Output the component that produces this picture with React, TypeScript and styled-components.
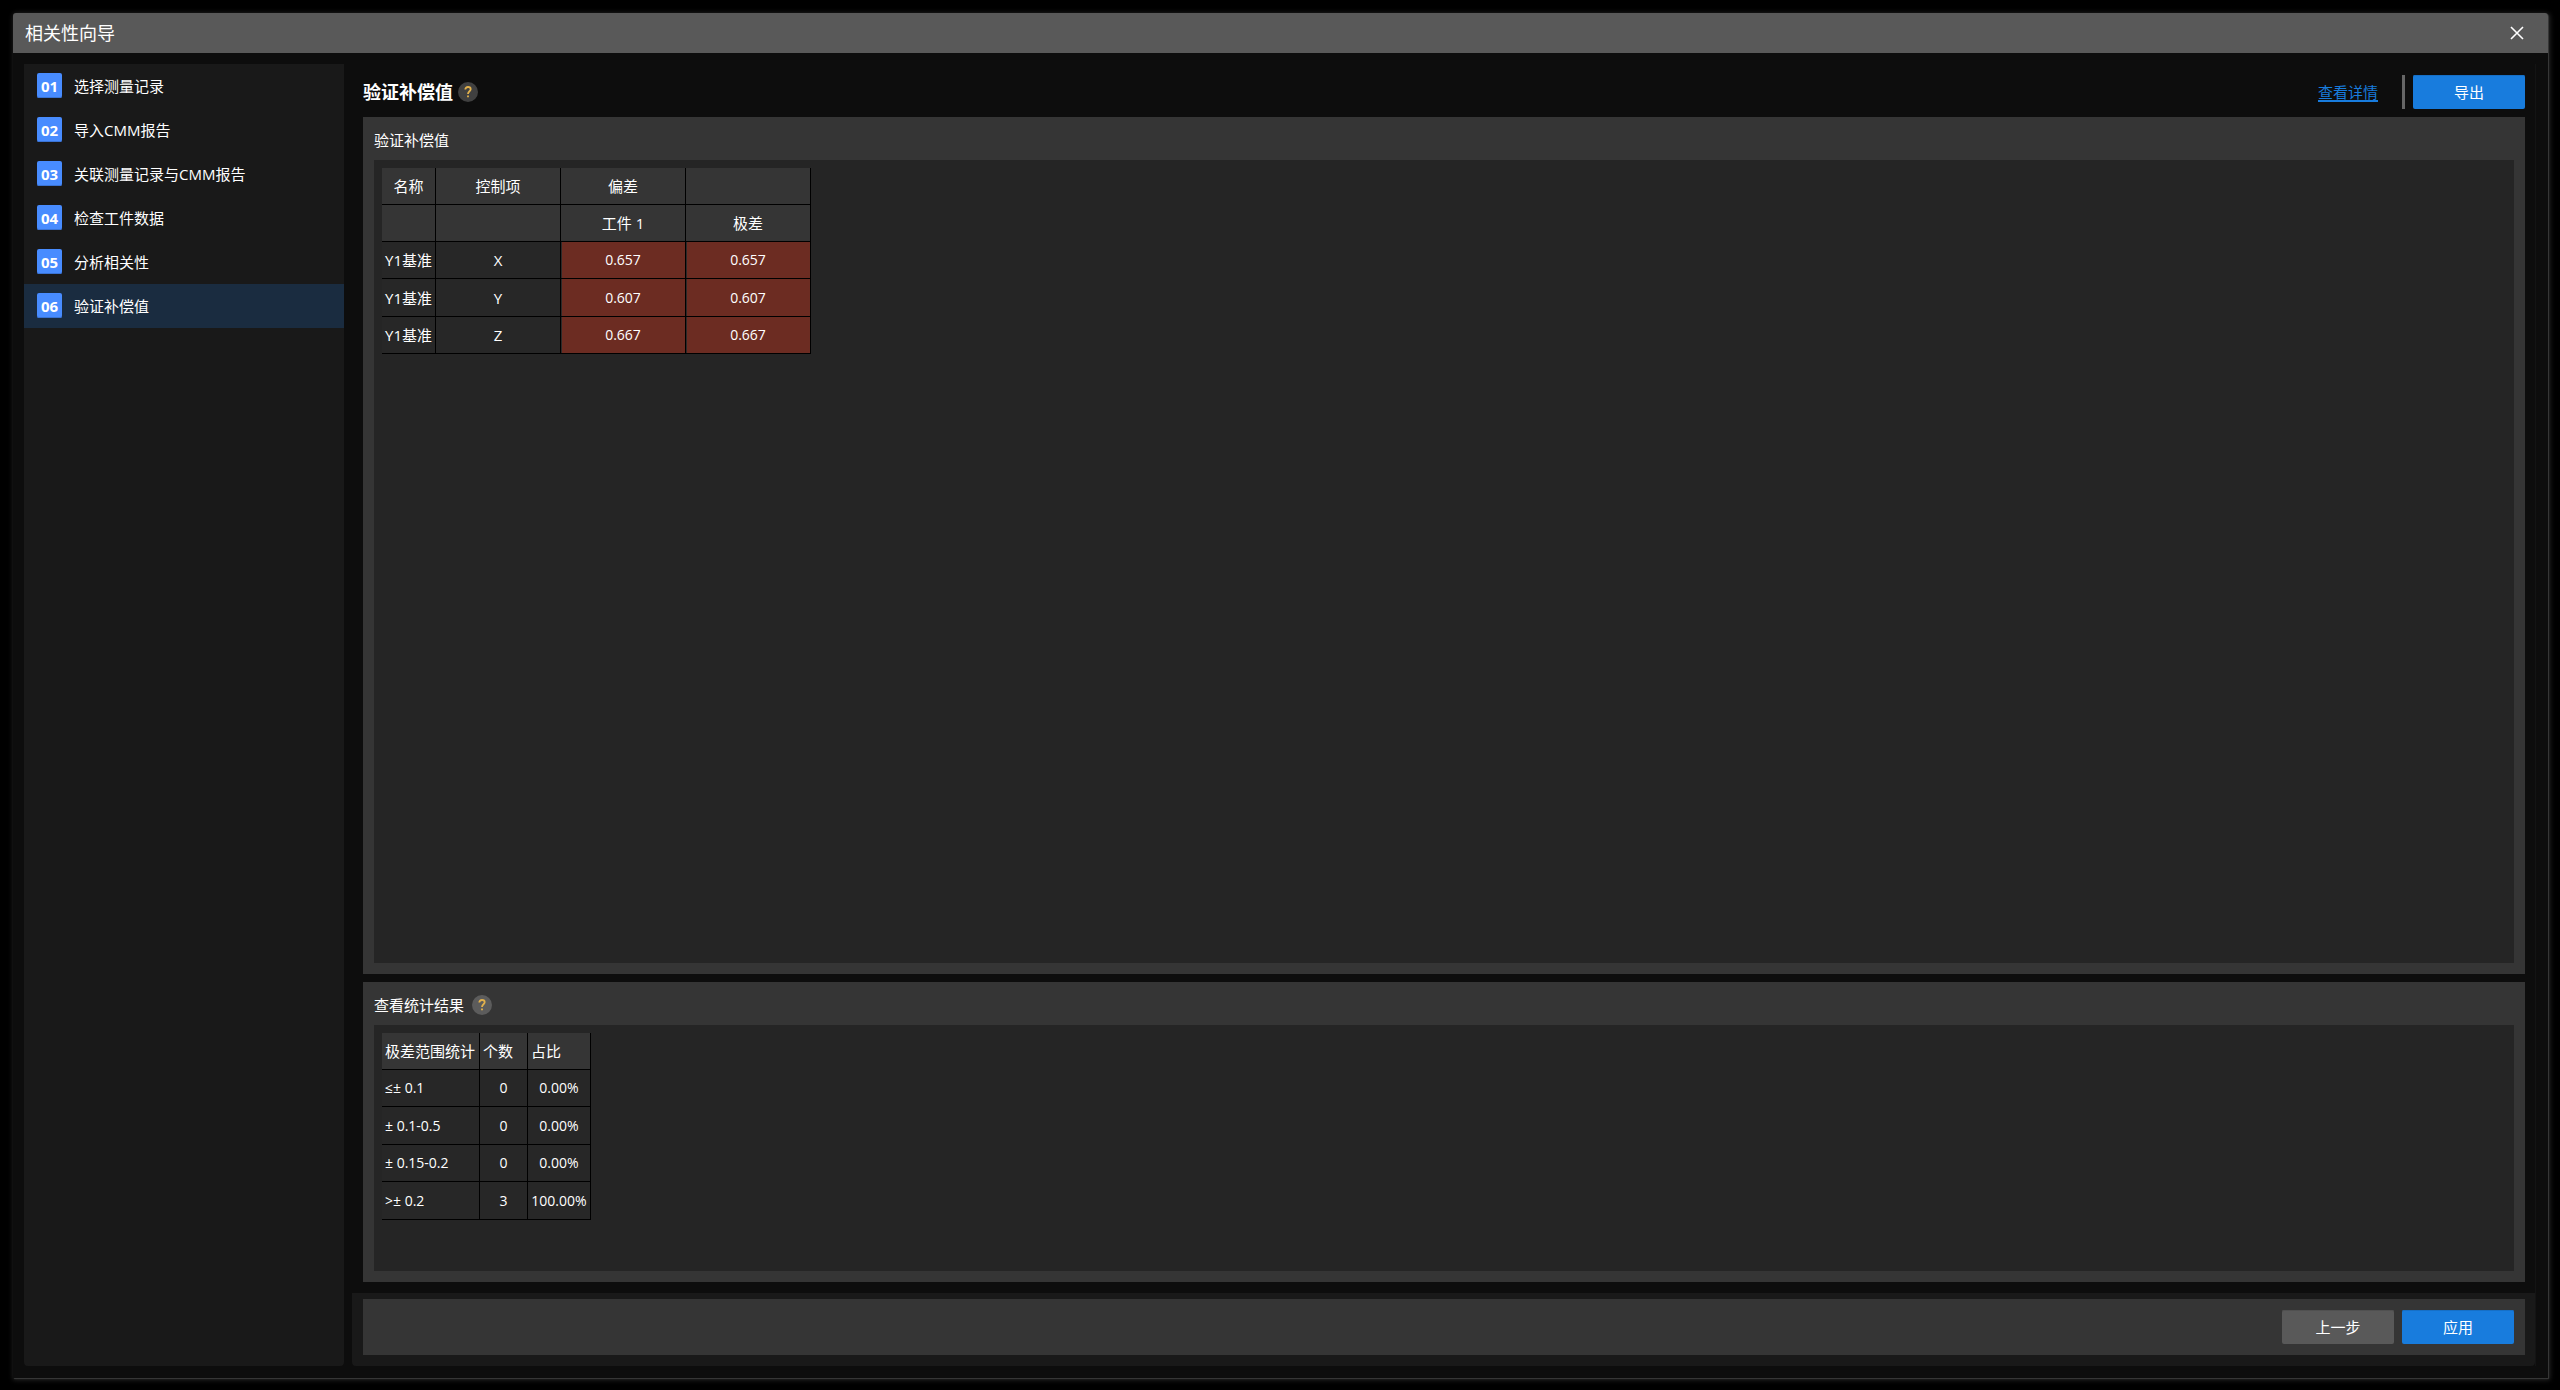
import React from "react";
import styled, { createGlobalStyle, css } from "styled-components";

const GlobalStyle = createGlobalStyle`
  *, *::before, *::after { box-sizing: border-box; }
  html, body, #root { height: 100%; }
  body {
    margin: 0;
    background: #000;
    color: #fff;
    font: 15px/20px "Open Sans", "Noto Sans CJK SC", sans-serif;
  }
  button { font: inherit; color: inherit; cursor: pointer; }
`;

const Screen = styled.div`
  min-height: 100%;
  padding: 13px 12px 12px 13px;
  display: flex;
`;

const Dialog = styled.section`
  flex: 1;
  min-width: 0;
  display: flex;
  flex-direction: column;
  background: #0d0d0d;
  border-radius: 3px 3px 0 0;
  box-shadow: 1px 1px 1px #3a3a3a, 1px 1px 5px 1px #262626;
`;

const TitleBar = styled.header`
  height: 40px;
  padding: 0 24px 0 12px;
  display: flex;
  align-items: center;
  justify-content: space-between;
  background: #595959;
  border-radius: 3px 3px 0 0;
`;

const Title = styled.h1`
  margin: 0;
  font-size: 18px;
  line-height: 24px;
  font-weight: 400;
`;

const CloseButton = styled.button`
  display: flex;
  padding: 0;
  border: 0;
  background: none;
`;

const Body = styled.div`
  flex: 1;
  display: flex;
  gap: 8px;
  padding: 11px 12px 12px 11px;
`;

const Steps = styled.nav`
  width: 320px;
  flex: none;
  background: #191919;
  border-radius: 0 0 4px 4px;
`;

const StepList = styled.ol`
  list-style: none;
  margin: 0;
  padding: 0;
`;

const Step = styled.button<{ $active: boolean }>`
  width: 100%;
  height: 44px;
  padding: 0 13px 1px;
  display: flex;
  align-items: center;
  gap: 12px;
  border: 0;
  text-align: left;
  background: ${(p) => (p.$active ? "#1a2c40" : "transparent")};
`;

const StepNumber = styled.span`
  width: 25px;
  height: 25px;
  display: grid;
  place-items: center;
  border-radius: 2px;
  background: #488cff;
  box-shadow: inset 0 -1px 0 #3a73d4;
  font-weight: 700;
`;

const Content = styled.main`
  flex: 1;
  min-width: 0;
  display: flex;
  flex-direction: column;
  border-right: 1px solid #141414;
`;

const PageHeader = styled.div`
  height: 53px;
  padding: 3px 10px 0 11px;
  display: flex;
  align-items: center;
  gap: 5px;
`;

const PageTitle = styled.h2`
  margin: 0;
  font-size: 18px;
  line-height: 24px;
  font-weight: 700;
`;

const HelpButton = styled.button<{ $bright?: boolean }>`
  width: 20px;
  height: 20px;
  padding: 0;
  display: grid;
  place-items: center;
  border: 0;
  border-radius: 50%;
  background: ${(p) => (p.$bright ? "#5c5c5c" : "#404040")};
`;

const HeaderActions = styled.div`
  margin-left: auto;
  display: flex;
  align-items: center;
`;

const DetailLink = styled.a`
  color: #187cdd;
  text-decoration: underline 2px;
  text-underline-offset: 2px;
`;

const Divider = styled.span`
  width: 3px;
  height: 34px;
  margin: 0 8px 0 24px;
  background: #666;
`;

const ActionButton = styled.button<{ $primary?: boolean }>`
  width: 112px;
  height: 34px;
  padding: 0;
  border: 0;
  border-radius: 2px;
  background: ${(p) => (p.$primary ? "#187cdd" : "#595959")};
  box-shadow: inset 0 1px 0 ${(p) => (p.$primary ? "#166fc6" : "#505050")};
`;

const Panels = styled.div`
  flex: 1;
  display: flex;
  flex-direction: column;
  gap: 8px;
  padding: 0 10px 11px 11px;
`;

const Panel = styled.section<{ $grow?: boolean }>`
  display: flex;
  flex-direction: column;
  padding: 0 11px 11px;
  background: #353535;
  ${(p) => p.$grow && css`flex: 1;`}
`;

const PanelHeader = styled.div`
  height: 43px;
  padding-top: 3px;
  display: flex;
  align-items: center;
  gap: 8px;
`;

const PanelTitle = styled.h3`
  margin: 0;
  font-size: 15px;
  font-weight: 400;
`;

const PanelBody = styled.div`
  flex: 1;
  padding: 8px 8px 51px;
  background: #252525;
`;

const DataTable = styled.table`
  border-collapse: separate;
  border-spacing: 0;
  tbody tr:nth-child(even) { height: 38px; }
`;

const Col = styled.col<{ $width: number }>`
  width: ${(p) => p.$width}px;
`;

const cell = css<{ $align?: "left" | "center" }>`
  height: 37px;
  padding: 0 3px;
  border: solid #000;
  border-width: 0 1px 1px 0;
  font-weight: 400;
  white-space: nowrap;
  text-align: ${(p) => p.$align ?? "center"};
`;

const HeadCell = styled.th`
  ${cell}
  background: #353535;
`;

const NameCell = styled.td`
  ${cell}
  background: #272727;
`;

const ValueCell = styled.td<{ $alert?: boolean }>`
  ${cell}
  font-size: 14px;
  background: ${(p) => (p.$alert ? "#6c2c22" : "#272727")};
  box-shadow: ${(p) => (p.$alert ? "inset 1px 0 0 #2c2a2a" : "none")};
`;

const Footer = styled.footer`
  padding: 6px 10px 11px 11px;
  background: #191919;
  border-radius: 0 0 4px 4px;
`;

const FooterBar = styled.div`
  padding: 11px;
  display: flex;
  justify-content: flex-end;
  gap: 8px;
  background: #353535;
`;

const steps = ["选择测量记录", "导入CMM报告", "关联测量记录与CMM报告", "检查工件数据", "分析相关性", "验证补偿值"];

const deviations = [
  { name: "Y1基准", control: "X", part: "0.657", range: "0.657" },
  { name: "Y1基准", control: "Y", part: "0.607", range: "0.607" },
  { name: "Y1基准", control: "Z", part: "0.667", range: "0.667" },
];

const statistics = [
  { range: "≤± 0.1", count: "0", share: "0.00%" },
  { range: "± 0.1-0.5", count: "0", share: "0.00%" },
  { range: "± 0.15-0.2", count: "0", share: "0.00%" },
  { range: ">± 0.2", count: "3", share: "100.00%" },
];

function Help({ bright }: { bright?: boolean }) {
  return (
    <HelpButton type="button" aria-label="帮助" $bright={bright}>
      <svg width="8" height="12" viewBox="0 0 8 12" fill="none" stroke="#e3b24c" strokeWidth="1.8">
        <path d="M1.300 3.600C1.300 1.900 2.400 1 4 1s2.700.9 2.700 2.300C6.700 5.200 4 5.300 4 7.900" />
        <path d="M4 9.400v1.800" />
      </svg>
    </HelpButton>
  );
}

export default function App() {
  return (
    <>
      <GlobalStyle />
      <Screen>
        <Dialog>
          <TitleBar>
            <Title>相关性向导</Title>
            <CloseButton type="button" aria-label="关闭">
              <svg width="14" height="14" viewBox="0 0 14 14" stroke="#fff" strokeWidth="1.6">
                <path d="M1 1l12 12M13 1l-12 12" />
              </svg>
            </CloseButton>
          </TitleBar>
          <Body>
            <Steps>
              <StepList>
                {steps.map((label, i) => (
                  <li key={label}>
                    <Step type="button" $active={i === 5}>
                      <StepNumber>{`0${i + 1}`}</StepNumber>
                      <span>{label}</span>
                    </Step>
                  </li>
                ))}
              </StepList>
            </Steps>
            <Content>
              <PageHeader>
                <PageTitle>验证补偿值</PageTitle>
                <Help />
                <HeaderActions>
                  <DetailLink href="#details">查看详情</DetailLink>
                  <Divider />
                  <ActionButton type="button" $primary>导出</ActionButton>
                </HeaderActions>
              </PageHeader>
              <Panels>
                <Panel $grow>
                  <PanelHeader>
                    <PanelTitle>验证补偿值</PanelTitle>
                  </PanelHeader>
                  <PanelBody>
                    <DataTable>
                      <colgroup>
                        <Col $width={54} />
                        <Col $width={125} />
                        <Col $width={125} />
                        <Col $width={125} />
                      </colgroup>
                      <thead>
                        <tr>
                          <HeadCell>名称</HeadCell>
                          <HeadCell>控制项</HeadCell>
                          <HeadCell>偏差</HeadCell>
                          <HeadCell />
                        </tr>
                        <tr>
                          <HeadCell />
                          <HeadCell />
                          <HeadCell>工件 1</HeadCell>
                          <HeadCell>极差</HeadCell>
                        </tr>
                      </thead>
                      <tbody>
                        {deviations.map((row) => (
                          <tr key={row.control}>
                            <NameCell>{row.name}</NameCell>
                            <NameCell>{row.control}</NameCell>
                            <ValueCell $alert>{row.part}</ValueCell>
                            <ValueCell $alert>{row.range}</ValueCell>
                          </tr>
                        ))}
                      </tbody>
                    </DataTable>
                  </PanelBody>
                </Panel>
                <Panel>
                  <PanelHeader>
                    <PanelTitle>查看统计结果</PanelTitle>
                    <Help bright />
                  </PanelHeader>
                  <PanelBody>
                    <DataTable>
                      <colgroup>
                        <Col $width={98} />
                        <Col $width={48} />
                        <Col $width={63} />
                      </colgroup>
                      <thead>
                        <tr>
                          <HeadCell $align="left">极差范围统计</HeadCell>
                          <HeadCell $align="left">个数</HeadCell>
                          <HeadCell $align="left">占比</HeadCell>
                        </tr>
                      </thead>
                      <tbody>
                        {statistics.map((row) => (
                          <tr key={row.range}>
                            <ValueCell $align="left">{row.range}</ValueCell>
                            <ValueCell>{row.count}</ValueCell>
                            <ValueCell>{row.share}</ValueCell>
                          </tr>
                        ))}
                      </tbody>
                    </DataTable>
                  </PanelBody>
                </Panel>
              </Panels>
              <Footer>
                <FooterBar>
                  <ActionButton type="button">上一步</ActionButton>
                  <ActionButton type="button" $primary>应用</ActionButton>
                </FooterBar>
              </Footer>
            </Content>
          </Body>
        </Dialog>
      </Screen>
    </>
  );
}
